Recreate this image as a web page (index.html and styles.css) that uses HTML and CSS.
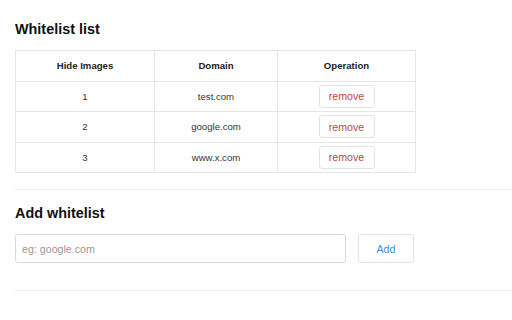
FILE: index.html
```html
<!DOCTYPE html>
<html>
<head>
<meta charset="utf-8">
<link rel="stylesheet" href="styles.css">
</head>
<body>
<div class="page">
  <section class="section">
    <h3 class="title">Whitelist list</h3>
    <table class="list">
      <colgroup><col class="c1"><col class="c2"><col class="c3"></colgroup>
      <thead>
        <tr><th>Hide Images</th><th>Domain</th><th>Operation</th></tr>
      </thead>
      <tbody>
        <tr><td>1</td><td>test.com</td><td><button class="btn btn-remove">remove</button></td></tr>
        <tr><td>2</td><td>google.com</td><td><button class="btn btn-remove">remove</button></td></tr>
        <tr><td>3</td><td>www.x.com</td><td><button class="btn btn-remove">remove</button></td></tr>
      </tbody>
    </table>
  </section>
  <hr class="sep">
  <section class="section add">
    <h3 class="title">Add whitelist</h3>
    <div class="add-row">
      <input class="input" type="text" placeholder="eg: google.com">
      <button class="btn btn-add">Add</button>
    </div>
  </section>
  <hr class="sep">
</div>
</body>
</html>
```
FILE: styles.css
```css
html, body {
  margin: 0;
  padding: 0;
  background: #fff;
}
body {
  font-family: "Liberation Sans", Arial, sans-serif;
  color: #333;
}
.page {
  padding: 21px 0 0 15px;
}
.title {
  margin: 0 0 12px 0;
  font-size: 14.4px;
  line-height: 17px;
  font-weight: bold;
  color: #111;
}
.list {
  border-collapse: collapse;
  table-layout: fixed;
  width: 400px;
  font-size: 9.6px;
}
.c1 { width: 139px; }
.c2 { width: 123px; }
.c3 { width: 138px; }
.list th, .list td {
  border: 1px solid #e6e6e6;
  text-align: center;
  padding: 0;
  height: 29.5px;
}
.list th {
  font-weight: bold;
  color: #222;
}
.list td {
  color: #333;
}
.sep {
  border: 0;
  border-top: 1px solid #eeeeee;
  margin: 16px 0 0 0;
  height: 0;
}
.add {
  padding-top: 15px;
}
.add .title {
  margin-bottom: 12px;
}
.add-row {
  display: flex;
  gap: 12px;
}
.btn {
  font-family: "Liberation Sans", Arial, sans-serif;
  font-size: 10.67px;
  background: #fff;
  border: 1px solid #e3e3e3;
  border-radius: 3px;
  padding: 0;
  cursor: pointer;
}
.btn-remove {
  width: 56px;
  height: 23px;
  color: #b94a3e;
  vertical-align: middle;
}
.btn-add {
  width: 56px;
  height: 29px;
  color: #3d8fd9;
}
.input {
  box-sizing: border-box;
  width: 331px;
  height: 29px;
  border: 1px solid #d9d9d9;
  border-radius: 3px;
  padding: 0 6px;
  font-family: "Liberation Sans", Arial, sans-serif;
  font-size: 10.67px;
  color: #333;
  outline: none;
}
.input::placeholder {
  color: #999;
}
.add + .sep {
  margin-top: 27px;
}
```
